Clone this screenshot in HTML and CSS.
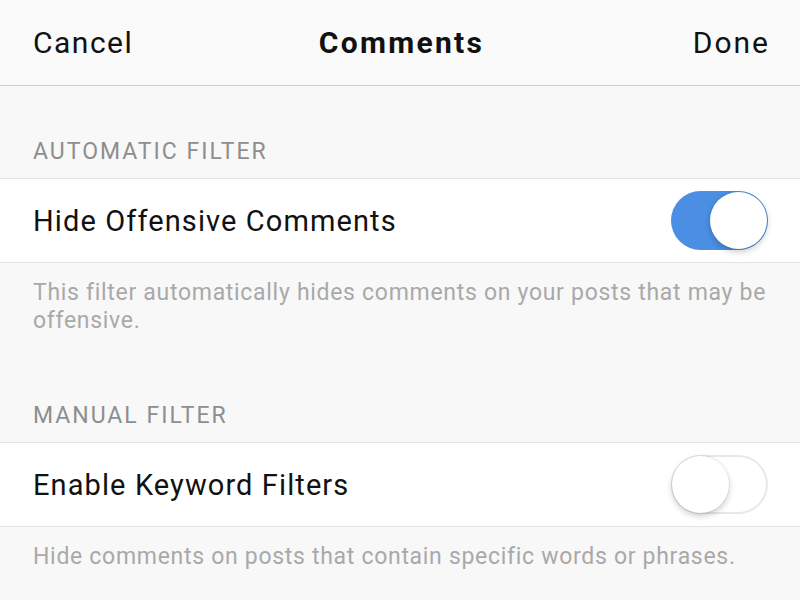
FILE: index.html
```html
<!DOCTYPE html>
<html lang="en">
<head>
    <meta charset="UTF-8">
    <meta name="viewport" content="width=device-width, initial-scale=1.0">
    <title>Comments</title>
    <link rel="stylesheet" href="styles.css">
</head>
<body>
    <header class="nav-bar">
        <button class="nav-btn">Cancel</button>
        <h1 class="nav-title">Comments</h1>
        <button class="nav-btn done">Done</button>
    </header>

    <section class="group">
        <h2 class="group-header">AUTOMATIC FILTER</h2>
        <div class="cell">
            <span class="cell-label">Hide Offensive Comments</span>
            <label class="switch">
                <input type="checkbox" checked>
                <span class="track"></span>
            </label>
        </div>
        <p class="group-footer">This filter automatically hides comments on your posts that may be offensive.</p>
    </section>

    <section class="group">
        <h2 class="group-header">MANUAL FILTER</h2>
        <div class="cell">
            <span class="cell-label">Enable Keyword Filters</span>
            <label class="switch">
                <input type="checkbox">
                <span class="track"></span>
            </label>
        </div>
        <p class="group-footer">Hide comments on posts that contain specific words or phrases.</p>
    </section>
</body>
</html>
```

FILE: styles.css
```css
:root {
    --ios-blue: #4a8fe3;
    --page-bg: #f8f8f8;
    --separator: #e3e3e3;
}

* {
    box-sizing: border-box;
    margin: 0;
    padding: 0;
    font-family: Roboto, 'Liberation Sans', sans-serif;
}

body {
    background: var(--page-bg);
    width: 800px;
    height: 600px;
    overflow: hidden;
}

.nav-bar {
    display: grid;
    grid-template-columns: 1fr auto 1fr;
    align-items: center;
    height: 86px;
    padding: 0 30px 0 33px;
    background: #fafafa;
    border-bottom: 1px solid #cdcdcd;
}

.nav-btn {
    justify-self: start;
    border: none;
    background: none;
    font-size: 30px;
    letter-spacing: 1.5px;
    color: #111;
    cursor: pointer;
}

.nav-btn.done {
    justify-self: end;
    letter-spacing: 2px;
}

.nav-title {
    font-size: 30px;
    font-weight: 700;
    letter-spacing: 2.3px;
    color: #111;
}

.group-header {
    padding: 53px 33px 13px;
    font-size: 23px;
    line-height: 26px;
    font-weight: 400;
    letter-spacing: 2px;
    color: #8e8e8e;
}

.cell {
    display: flex;
    align-items: center;
    justify-content: space-between;
    height: 85px;
    padding: 0 32px 0 33px;
    background: #fff;
    border-top: 1px solid var(--separator);
    border-bottom: 1px solid var(--separator);
}

.cell-label {
    font-size: 29px;
    letter-spacing: 1.1px;
    color: #111;
}

.group-footer {
    padding: 16px 33px 15px;
    font-size: 23px;
    line-height: 28px;
    letter-spacing: 0.7px;
    color: #a9a9a9;
}

/* iOS style switch */
.switch {
    position: relative;
    width: 97px;
    height: 59px;
    cursor: pointer;
}

.switch input {
    display: none;
}

.track {
    position: absolute;
    inset: 0;
    border-radius: 30px;
    background: #fff;
    box-shadow: inset 0 0 0 2px #e8e8e8;
    transition: all 0.3s ease;
}

.track::before {
    content: "";
    position: absolute;
    top: 1px;
    left: 1px;
    width: 57px;
    height: 57px;
    border-radius: 50%;
    background: #fff;
    box-shadow: 0 3px 6px rgba(0, 0, 0, 0.2), 0 0 0 1px rgba(0, 0, 0, 0.05);
    transition: all 0.3s ease;
}

.switch input:checked + .track {
    background: var(--ios-blue);
    box-shadow: none;
}

.switch input:checked + .track::before {
    left: 39px;
}
```
